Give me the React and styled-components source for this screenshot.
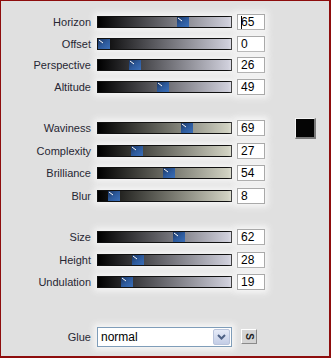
import React from 'react';
import styled, { createGlobalStyle } from 'styled-components';

const Global = createGlobalStyle`
  html, body { margin: 0; padding: 0; background: #dfdfdf; }
  * { box-sizing: border-box; }
`;

const Frame = styled.div`
  width: 331px;
  height: 358px;
  background: #e0e0e0;
  border-style: solid;
  border-color: #8e0d0d;
  border-width: 1px 2px 2px 1px;
  padding-top: ${(p) => p.top}px;
  font-family: "Liberation Sans", Arial, sans-serif;
  display: flex;
  flex-direction: column;
`;

const Group = styled.div`
  display: flex;
  flex-direction: column;
  margin-top: ${(p) => p.gap || 0}px;
`;

const Row = styled.div`
  display: flex;
  align-items: center;
  height: ${(p) => p.h}px;
`;

const Label = styled.div`
  width: 90px;
  text-align: right;
  font-size: 11px;
  color: #262633;
`;

const Track = styled.div`
  position: relative;
  width: 135px;
  height: 12px;
  margin-left: 6px;
  border: 1px solid #111;
  background: linear-gradient(to right, #000 0%, ${(p) => p.end} 100%);
  box-shadow: 0 0 6px 3px #f6f6f6;
`;

const Thumb = styled.svg`
  position: absolute;
  top: 0;
  display: block;
`;

const NumBox = styled.div`
  position: relative;
  width: 28px;
  height: 16px;
  margin-left: 5px;
  background: #fff;
  border: 1px solid #a9a9a9;
  box-shadow: 0 0 6px 3px #f6f6f6;
  font-size: 12px;
  line-height: 14px;
  color: #000;
  padding-left: 3px;
`;

const Caret = styled.span`
  position: absolute;
  left: 3px;
  top: 1px;
  width: 1px;
  height: 13px;
  background: #000;
`;

const Swatch = styled.div`
  width: 21px;
  height: 21px;
  margin-left: 30px;
  border-style: solid;
  border-width: 1px 2px 2px 1px;
  border-color: #f4f4f4 #7a7a7a #7a7a7a #f4f4f4;
  background: #050505;
`;

const Select = styled.div`
  display: flex;
  align-items: stretch;
  width: 135px;
  height: 20px;
  margin-left: 6px;
  border: 1px solid #7f9db9;
  background: #fff;
  box-shadow: 0 0 6px 3px #f6f6f6;
`;

const SelectText = styled.div`
  flex: 1;
  font-size: 12px;
  line-height: 18px;
  padding-left: 3px;
  color: #000;
`;

const DropBtn = styled.div`
  width: 17px;
  margin: 1px;
  border: 1px solid #b9c4dc;
  border-radius: 2px;
  background: linear-gradient(#e6ebf8, #c3cde6);
  display: flex;
  align-items: center;
  justify-content: center;
`;

const SmallBtn = styled.div`
  width: 16px;
  height: 15px;
  margin-left: 9px;
  border: 1px solid #fff;
  border-right-color: #8a8a8a;
  border-bottom-color: #8a8a8a;
  background: #d4d4d4;
  font-size: 10px;
  font-weight: bold;
  color: #222;
  display: flex;
  align-items: center;
  justify-content: center;
  span { display: inline-block; transform: rotate(90deg); }
`;

const ThumbIcon = ({ value }) => {
  const left = Math.round((value / 100) * 121);
  return (
    <Thumb width="12" height="10" viewBox="0 0 12 10" style={{ left }}>
      <defs>
        <linearGradient id="tg" x1="0" y1="0" x2="1" y2="1">
          <stop offset="0" stopColor="#1b3560" />
          <stop offset="0.5" stopColor="#2d5a9c" />
          <stop offset="1" stopColor="#3b6fb8" />
        </linearGradient>
      </defs>
      <rect x="0" y="0" width="12" height="10" fill="url(#tg)" />
      <line x1="1" y1="1" x2="5" y2="4" stroke="#fff" strokeWidth="1" />
    </Thumb>
  );
};

const SliderRow = ({ label, value, end, h, caret, children }) => (
  <Row h={h}>
    <Label>{label}</Label>
    <Track end={end}>
      <ThumbIcon value={value} />
    </Track>
    <NumBox>
      {caret && <Caret />}
      {value}
    </NumBox>
    {children}
  </Row>
);

const cool = '#d3d3df';
const warm = '#d5d6c6';

export default function App() {
  return (
    <>
      <Global />
      <Frame top={10}>
        <Group>
          <SliderRow label="Horizon" value={65} end={cool} h={21.7} caret />
          <SliderRow label="Offset" value={0} end={cool} h={21.7} />
          <SliderRow label="Perspective" value={26} end={cool} h={21.7} />
          <SliderRow label="Altitude" value={49} end={cool} h={21.7} />
        </Group>
        <Group gap={19}>
          <SliderRow label="Waviness" value={69} end={warm} h={22.6}>
            <Swatch />
          </SliderRow>
          <SliderRow label="Complexity" value={27} end={warm} h={22.6} />
          <SliderRow label="Brilliance" value={54} end={warm} h={22.6} />
          <SliderRow label="Blur" value={8} end={warm} h={22.6} />
        </Group>
        <Group gap={19}>
          <SliderRow label="Size" value={62} end={cool} h={22.5} />
          <SliderRow label="Height" value={28} end={cool} h={22.5} />
          <SliderRow label="Undulation" value={19} end={cool} h={22.5} />
        </Group>
        <Group gap={32}>
          <Row h={22}>
            <Label>Glue</Label>
            <Select>
              <SelectText>normal</SelectText>
              <DropBtn>
                <svg width="9" height="6" viewBox="0 0 9 6">
                  <path d="M1 1 L4.5 4.5 L8 1" fill="none" stroke="#4d6185" strokeWidth="2" />
                </svg>
              </DropBtn>
            </Select>
            <SmallBtn><span>S</span></SmallBtn>
          </Row>
        </Group>
      </Frame>
    </>
  );
}
